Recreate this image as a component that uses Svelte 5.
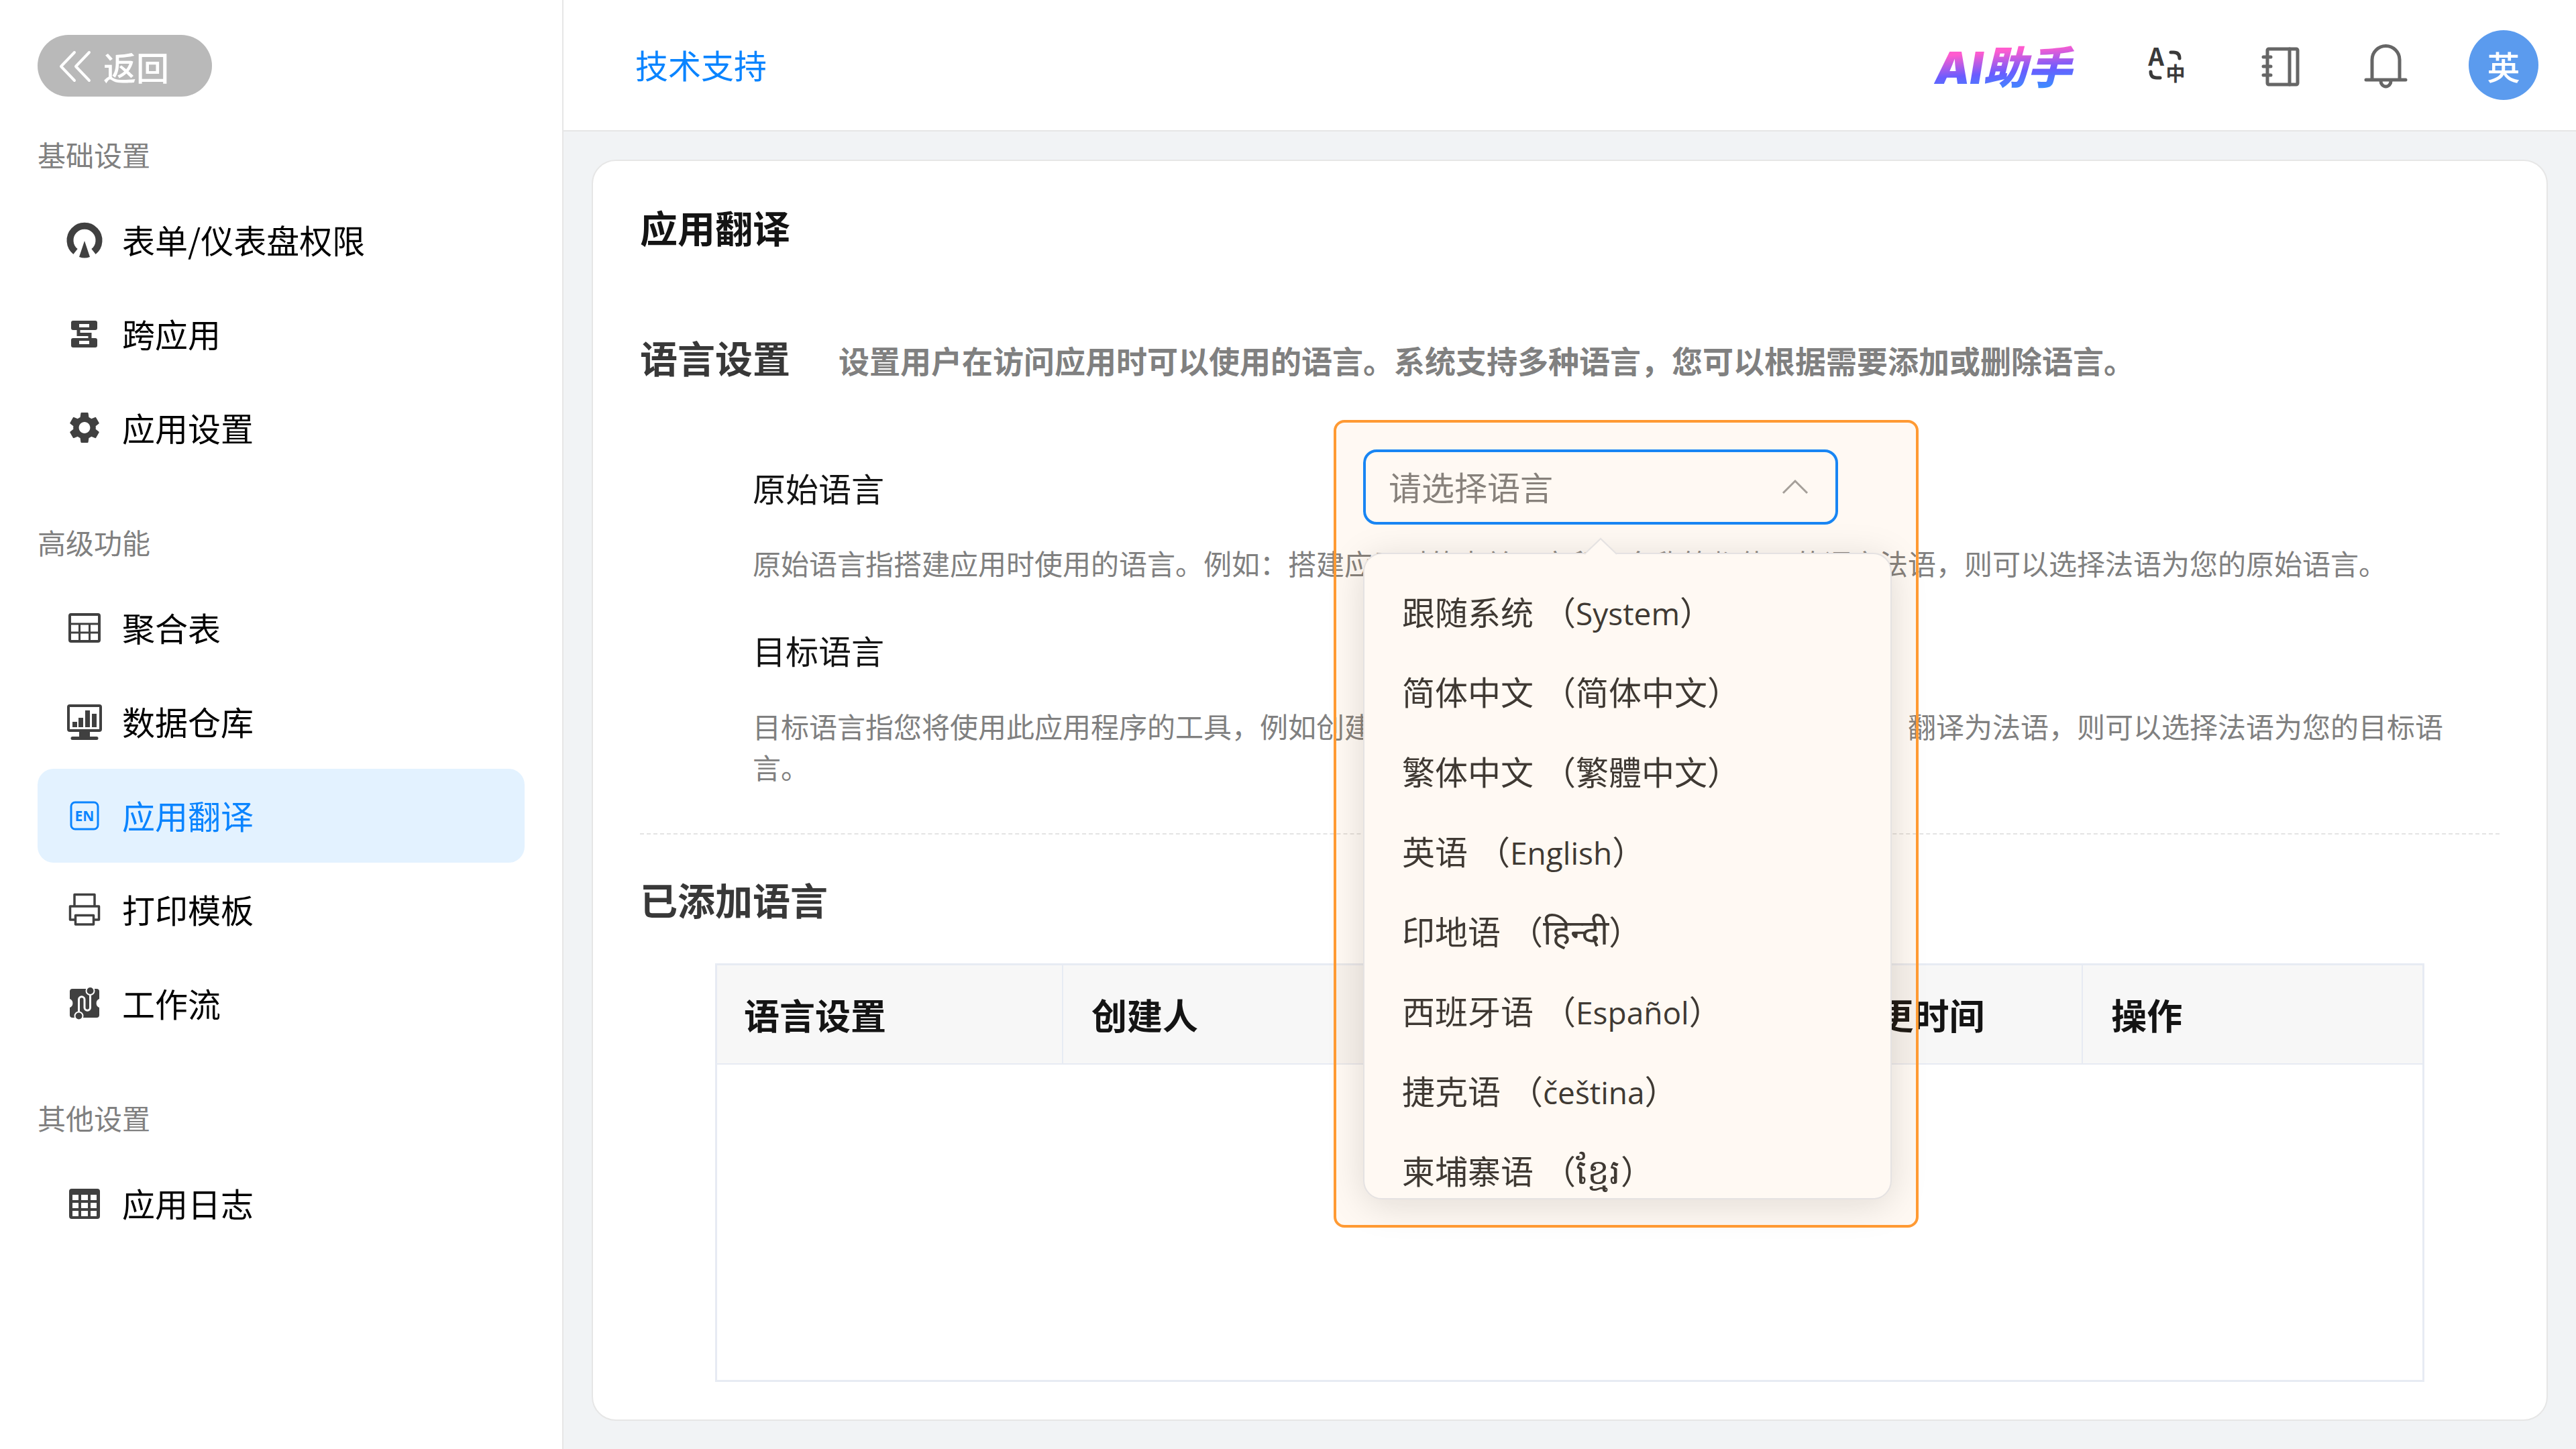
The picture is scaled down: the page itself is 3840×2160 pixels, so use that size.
<script>
  const menu = [
    {
      title: "基础设置",
      items: [
        { name: "表单/仪表盘权限", icon: "gauge" },
        { name: "跨应用", icon: "cross" },
        { name: "应用设置", icon: "gear" },
      ],
    },
    {
      title: "高级功能",
      items: [
        { name: "聚合表", icon: "table" },
        { name: "数据仓库", icon: "monitor" },
        { name: "应用翻译", icon: "en" },
        { name: "打印模板", icon: "printer" },
        { name: "工作流", icon: "flow" },
      ],
    },
    {
      title: "其他设置",
      items: [{ name: "应用日志", icon: "grid" }],
    },
  ];

  const languages = [
    { name: "跟随系统", native: "System", lang: "en" },
    { name: "简体中文", native: "简体中文", lang: "zh-CN" },
    { name: "繁体中文", native: "繁體中文", lang: "zh-TW" },
    { name: "英语", native: "English", lang: "en" },
    { name: "印地语", native: "हिन्दी", lang: "hi" },
    { name: "西班牙语", native: "Español", lang: "es" },
    { name: "捷克语", native: "čeština", lang: "cs" },
    { name: "柬埔寨语", native: "ខ្មែរ", lang: "km" },
  ];

  const columns = ["语言设置", "创建人", "创建时间", "最后变更时间", "操作"];

  let active = $state("应用翻译");
  let selected = $state("");
  let open = $state(true);

  function choose(name) {
    selected = name;
    open = false;
  }

  // Keep the native list closed, the panel below replaces it
  function toggle(event) {
    event.preventDefault();
    open = !open;
  }
</script>

<div class="page">
  <aside>
    <button class="back">
      <svg viewBox="0 0 48 48" fill="none" stroke="currentColor" stroke-width="4" stroke-linecap="round" stroke-linejoin="round">
        <path d="M23 4 L3 25 L23 46 M45 4 L25 25 L45 46" />
      </svg>
      返回
    </button>

    <nav>
      {#each menu as section}
        <section>
          <h3>{section.title}</h3>
          <ul>
            {#each section.items as item}
              <li>
                <a href="#{item.icon}" class:active={active === item.name} onclick={() => (active = item.name)}>
                  <svg class="icon" viewBox="0 0 56 56">
                    {#if item.icon === "gauge"}
                      <path d="M14.5 45 A21.5 21.5 0 1 1 41.5 45" fill="none" stroke="currentColor" stroke-width="10" />
                      <path d="M28 29 L36 53 Q28 56 20 53 Z" fill="currentColor" />
                    {:else if item.icon === "cross"}
                      <path
                        fill="currentColor"
                        fill-rule="evenodd"
                        d="M11 8h33a3 3 0 0 1 3 3v8a3 3 0 0 1-3 3H11a3 3 0 0 1-3-3v-8a3 3 0 0 1 3-3zM20 13v5h15v-5zM11 34h33a3 3 0 0 1 3 3v8a3 3 0 0 1-3 3H11a3 3 0 0 1-3-3v-8a3 3 0 0 1 3-3zM20 38v5h15v-5z"
                      />
                      <path d="M19 21v7.500h17v7" fill="none" stroke="currentColor" stroke-width="5" />
                    {:else if item.icon === "gear"}
                      <path
                        transform="translate(0 -.5) scale(2.333)"
                        fill="currentColor"
                        d="M19.14 12.94c.04-.3.06-.61.06-.94 0-.32-.02-.64-.07-.94l2.03-1.58c.18-.14.23-.41.12-.61l-1.92-3.32c-.12-.22-.37-.29-.59-.22l-2.39.96c-.5-.38-1.03-.7-1.62-.94l-.36-2.54c-.04-.24-.24-.41-.48-.41h-3.84c-.24 0-.43.17-.47.41l-.36 2.54c-.59.24-1.13.57-1.62.94l-2.39-.96c-.22-.08-.47 0-.59.22L2.74 8.87c-.12.21-.08.47.12.61l2.03 1.58c-.05.3-.09.63-.09.94s.02.64.07.94l-2.03 1.58c-.18.14-.23.41-.12.61l1.92 3.32c.12.22.37.29.59.22l2.39-.96c.5.38 1.03.7 1.62.94l.36 2.54c.05.24.24.41.48.41h3.84c.24 0 .44-.17.47-.41l.36-2.54c.59-.24 1.13-.56 1.62-.94l2.39.96c.22.08.47 0 .59-.22l1.92-3.32c.12-.22.07-.47-.12-.61l-2.01-1.58zM12 15.6c-1.98 0-3.6-1.62-3.6-3.6s1.62-3.6 3.6-3.6 3.6 1.62 3.6 3.6-1.62 3.6-3.6 3.6z"
                      />
                    {:else if item.icon === "table"}
                      <g fill="none" stroke="currentColor">
                        <rect x="6" y="8" width="44" height="40" rx="2" stroke-width="4" />
                        <path d="M6 22H50M6 35H50M20.500 22V48M35.500 22V48" stroke-width="3" />
                      </g>
                    {:else if item.icon === "monitor"}
                      <rect x="4" y="4" width="48" height="37" rx="2" fill="none" stroke="currentColor" stroke-width="4" />
                      <path
                        fill="currentColor"
                        d="M10 28h7v8h-7zM19 22h7v14h-7zM29 11h7v25h-7zM39 16h7v20h-7zM20 43h16v8H20zM10 50h36a2 2 0 0 1 0 5H10a2 2 0 0 1 0-5z"
                      />
                    {:else if item.icon === "en"}
                      <rect x="8" y="8" width="40" height="40" rx="6" fill="none" stroke="currentColor" stroke-width="3" />
                      <text x="28" y="36" text-anchor="middle" class="en">EN</text>
                    {:else if item.icon === "printer"}
                      <path
                        fill="none"
                        stroke="currentColor"
                        stroke-width="3.500"
                        stroke-linejoin="round"
                        d="M13 23V5.500H43V23M13 43H6.500V23H49.500V43H43M14.500 36.500H41.500V50H14.500Z"
                      />
                    {:else if item.icon === "flow"}
                      <path
                        fill="currentColor"
                        d="M10 6H46a4 4 0 0 1 4 4V21a7 7 0 0 0 0 13V45a4 4 0 0 1-4 4H10a4 4 0 0 1-4-4V34a7 7 0 0 0 0-13V10a4 4 0 0 1 4-4z"
                      />
                      <g stroke="#fff" stroke-width="3">
                        <path fill="none" d="M19.500 42V22a4.250 4.250 0 0 1 8.500 0V34a4.250 4.250 0 0 0 8.500 0V12" />
                        <circle cx="36.500" cy="9" r="6" fill="currentColor" stroke-width="2" />
                        <circle cx="19.500" cy="46.500" r="6" fill="currentColor" stroke-width="2" />
                      </g>
                    {:else}
                      <path
                        fill="currentColor"
                        fill-rule="evenodd"
                        d="M9 6H47a4 4 0 0 1 4 4V47a4 4 0 0 1-4 4H9a4 4 0 0 1-4-4V10a4 4 0 0 1 4-4zM10 15v8h9v-8zM23 15v8h10v-8zM37 15v8h9v-8zM10 27v8h9v-8zM23 27v8h10v-8zM37 27v8h9v-8zM10 39v8h9v-8zM23 39v8h10v-8zM37 39v8h9v-8z"
                      />
                    {/if}
                  </svg>
                  <span>{item.name}</span>
                </a>
              </li>
            {/each}
          </ul>
        </section>
      {/each}
    </nav>
  </aside>

  <div class="content">
    <header>
      <a class="support" href="#support">技术支持</a>
      <div class="tools">
        <a class="ai" href="#ai">AI助手</a>
        <button class="tool translate" aria-label="切换语言">
          <svg viewBox="0 0 64 64">
            <text x="18" y="33" text-anchor="middle" class="latin">A</text>
            <text x="47" y="56" text-anchor="middle" class="han">中</text>
            <path d="M40 13h4q9 0 9 9M10 42q0 9 9 9h5" fill="none" stroke="currentColor" stroke-width="5" stroke-linecap="round" />
          </svg>
        </button>
        <button class="tool" aria-label="手册">
          <svg viewBox="0 0 64 64" fill="none" stroke="currentColor" stroke-width="5" stroke-linecap="round">
            <rect x="12" y="8" width="45" height="53" rx="2" />
            <path d="M45 8V61M6 20H17M6 34H17M6 47H17" />
          </svg>
        </button>
        <button class="tool" aria-label="通知">
          <svg viewBox="0 0 64 64" fill="none" stroke="currentColor" stroke-width="5" stroke-linecap="round">
            <path d="M12 54V24a20.500 20.500 0 0 1 41 0V54M3 54H62M25 56a7.500 8 0 0 0 15 0" />
          </svg>
        </button>
        <button class="avatar">英</button>
      </div>
    </header>

    <main>
      <h1>应用翻译</h1>

      <div class="heading">
        <h2>语言设置</h2>
        <p>设置用户在访问应用时可以使用的语言。系统支持多种语言，您可以根据需要添加或删除语言。</p>
      </div>

      <div class="settings">
        <div class="field">
          <label for="source-lang">原始语言</label>
          <div class="picker">
            <select id="source-lang" bind:value={selected} onmousedown={toggle}>
              <option value="">请选择语言</option>
              {#each languages as language}
                <option value={language.name}>{language.name}</option>
              {/each}
            </select>
            <svg class="arrow" class:closed={!open} viewBox="0 0 40 24" fill="none" stroke="currentColor" stroke-width="3">
              <path d="M2 21 L20 3 L38 21" />
            </svg>

            {#if open}
              <div class="dropdown">
                <svg class="tip" viewBox="0 0 48 24">
                  <path d="M0 24 L24 1 L48 24" fill="#fff" stroke="#e4e7ed" stroke-width="2" />
                </svg>
                <div class="options" role="listbox" aria-label="原始语言">
                  {#each languages as language}
                    <button role="option" aria-selected={selected === language.name} onclick={() => choose(language.name)}>
                      <span>{language.name}</span>
                      <span>（<span class="native" lang={language.lang}>{language.native}</span>）</span>
                    </button>
                  {/each}
                </div>
              </div>
              <div class="highlight"></div>
            {/if}
          </div>
        </div>
        <p>原始语言指搭建应用时使用的语言。例如：搭建应用时的表单、字段和名称等都使用的语言法语，则可以选择法语为您的原始语言。</p>

        <h4>目标语言</h4>
        <p>目标语言指您将使用此应用程序的工具，例如创建的应用为中文，需要面向法国的用户使用，翻译为法语，则可以选择法语为您的目标语言。</p>
      </div>

      <h2 class="added">已添加语言</h2>

      <div class="table-wrap">
        <table>
          <thead>
            <tr>
              {#each columns as column}
                <th>{column}</th>
              {/each}
            </tr>
          </thead>
          <tbody></tbody>
        </table>
      </div>
    </main>
  </div>
</div>

<style>
  :global(body) {
    margin: 0;
    background: #f1f3f5;
  }

  .page {
    --blue: #0a84ff;
    --border: #e6e6e6;
    --table-border: #e7ebf3;
    --muted: #808080;
    display: flex;
    min-height: 100vh;
    font-family: "Noto Sans CJK SC", "Noto Sans", sans-serif;
    font-size: 49px;
    color: #141414;
  }

  h1,
  h2,
  h3,
  h4,
  p,
  ul {
    margin: 0;
    padding: 0;
  }

  a {
    text-decoration: none;
  }

  button,
  select {
    border: none;
    background: none;
    padding: 0;
    font: inherit;
    color: inherit;
    cursor: pointer;
  }

  svg {
    display: block;
    flex: none;
    overflow: visible;
  }

  /* Sidebar */
  aside {
    box-sizing: border-box;
    flex: none;
    width: 840px;
    padding: 52px 56px;
    background: #fff;
    border-right: 2px solid var(--border);
  }

  .back {
    display: flex;
    align-items: center;
    gap: 18px;
    width: 260px;
    height: 92px;
    padding-left: 32px;
    border-radius: 46px;
    background: #b9b9b9;
    color: #fff;
    font-weight: 500;
  }

  .back svg {
    width: 48px;
    height: 48px;
  }

  nav {
    display: flex;
    flex-direction: column;
    gap: 72px;
    margin-top: 58px;
  }

  h3 {
    margin-bottom: 30px;
    font-size: 42px;
    font-weight: 400;
    line-height: 56px;
    color: var(--muted);
  }

  nav ul {
    list-style: none;
  }

  nav a {
    display: flex;
    align-items: center;
    gap: 28px;
    height: 140px;
    padding-left: 42px;
    border-radius: 24px;
    color: #000;
  }

  nav span {
    padding-bottom: 4px;
  }

  .icon {
    width: 56px;
    height: 56px;
    color: #404040;
  }

  nav a.active {
    background: #e3f2ff;
    color: var(--blue);
  }

  .active .icon {
    color: var(--blue);
  }

  .en {
    font-family: "Noto Sans", sans-serif;
    font-size: 21px;
    font-weight: 700;
    fill: currentColor;
  }

  /* Header */
  .content {
    display: flex;
    flex: 1;
    flex-direction: column;
    min-width: 0;
  }

  header {
    box-sizing: border-box;
    display: flex;
    align-items: center;
    justify-content: space-between;
    height: 196px;
    padding: 0 56px 0 107px;
    background: #fff;
    border-bottom: 2px solid var(--border);
  }

  .support {
    padding-bottom: 4px;
    color: var(--blue);
  }

  .tools {
    display: flex;
    align-items: center;
    gap: 92px;
  }

  .ai {
    padding: 8px 16px 0 8px;
    font-family: Inter, "Noto Sans CJK SC", sans-serif;
    font-size: 66px;
    font-weight: 900;
    font-style: italic;
    line-height: 80px;
    background: linear-gradient(175deg, #ff5ccf 30%, #6a5cff 60%, #3d8bff 85%);
    background-clip: text;
    -webkit-background-clip: text;
    color: transparent;
  }

  .tool {
    color: #666;
  }

  .tool svg {
    width: 64px;
    height: 64px;
  }

  .translate {
    margin-right: 16px;
    color: #3a3a3a;
  }

  .translate text {
    font-weight: 700;
    fill: currentColor;
  }

  .latin {
    font-size: 37px;
  }

  .han {
    font-size: 29px;
  }

  .avatar {
    width: 104px;
    height: 104px;
    border-radius: 50%;
    background: #5b9bee;
    color: #fff;
    font-weight: 500;
  }

  /* Card */
  main {
    box-sizing: border-box;
    display: flex;
    flex: 1;
    flex-direction: column;
    margin: 42px;
    padding: 56px 70px;
    background: #fff;
    border: 2px solid var(--border);
    border-radius: 36px;
  }

  h1,
  h2 {
    font-size: 56px;
    font-weight: 700;
    line-height: 84px;
  }

  h2 {
    color: #383838;
  }

  .heading {
    display: flex;
    align-items: baseline;
    gap: 72px;
    margin-top: 110px;
  }

  .heading p {
    font-size: 46px;
    font-weight: 700;
    color: var(--muted);
  }

  .settings {
    margin-top: 96px;
    padding: 0 56px 69px 168px;
    border-bottom: 2px dashed #e4e4e4;
  }

  .settings p {
    font-size: 42px;
    line-height: 61px;
    color: var(--muted);
  }

  .field {
    display: flex;
    align-items: center;
    margin-bottom: 26px;
  }

  .field label {
    width: 910px;
  }

  .settings h4 {
    margin: 58px 0 40px;
    font-weight: 400;
    line-height: 84px;
  }

  .picker {
    position: relative;
    width: 708px;
  }

  select {
    display: block;
    width: 100%;
    height: 112px;
    padding: 0 100px 4px 34px;
    border: 4px solid var(--blue);
    border-radius: 20px;
    appearance: none;
    outline: none;
    color: var(--muted);
  }

  .arrow {
    position: absolute;
    top: 44px;
    right: 44px;
    width: 40px;
    height: 24px;
    color: #a0a0a0;
    pointer-events: none;
  }

  .arrow.closed {
    transform: rotate(180deg);
  }

  .dropdown {
    position: absolute;
    z-index: 1;
    top: 154px;
    left: 0;
    box-sizing: border-box;
    width: 788px;
    height: 964px;
    background: #fff;
    border: 2px solid #e4e7ed;
    border-radius: 28px;
    box-shadow: 0 8px 56px rgba(0, 0, 0, 0.13);
  }

  .tip {
    position: absolute;
    top: -24px;
    left: 328px;
    width: 48px;
    height: 24px;
  }

  .options {
    box-sizing: border-box;
    height: 100%;
    padding-top: 25px;
    overflow: hidden;
  }

  .options button {
    display: flex;
    gap: 14px;
    width: 100%;
    height: 119px;
    padding-left: 56px;
    line-height: 119px;
    white-space: nowrap;
    color: #333;
  }

  .native:not(:lang(zh)) {
    font-family: "Open Sans", "Noto Sans", sans-serif;
    font-size: 46px;
  }

  .native:lang(hi),
  .native:lang(km) {
    font-size: 52px;
  }

  .highlight {
    position: absolute;
    z-index: 2;
    top: -44px;
    left: -44px;
    box-sizing: border-box;
    width: 872px;
    height: 1204px;
    background: rgba(255, 153, 51, 0.06);
    border: 4px solid #ff9a33;
    border-radius: 16px;
    pointer-events: none;
  }

  .added {
    margin-top: 54px;
  }

  .table-wrap {
    flex: 1;
    margin: 54px 112px 0;
    border: 3px solid var(--table-border);
  }

  table {
    width: 100%;
    table-layout: fixed;
    border-collapse: collapse;
  }

  th {
    height: 146px;
    padding: 0 42px;
    background: #f7f7f7;
    border-bottom: 2px solid var(--table-border);
    font-size: 53px;
    font-weight: 700;
    text-align: left;
  }

  th:first-child {
    width: 432px;
    padding-left: 40px;
  }

  th + th {
    border-left: 2px solid var(--table-border);
  }
</style>
